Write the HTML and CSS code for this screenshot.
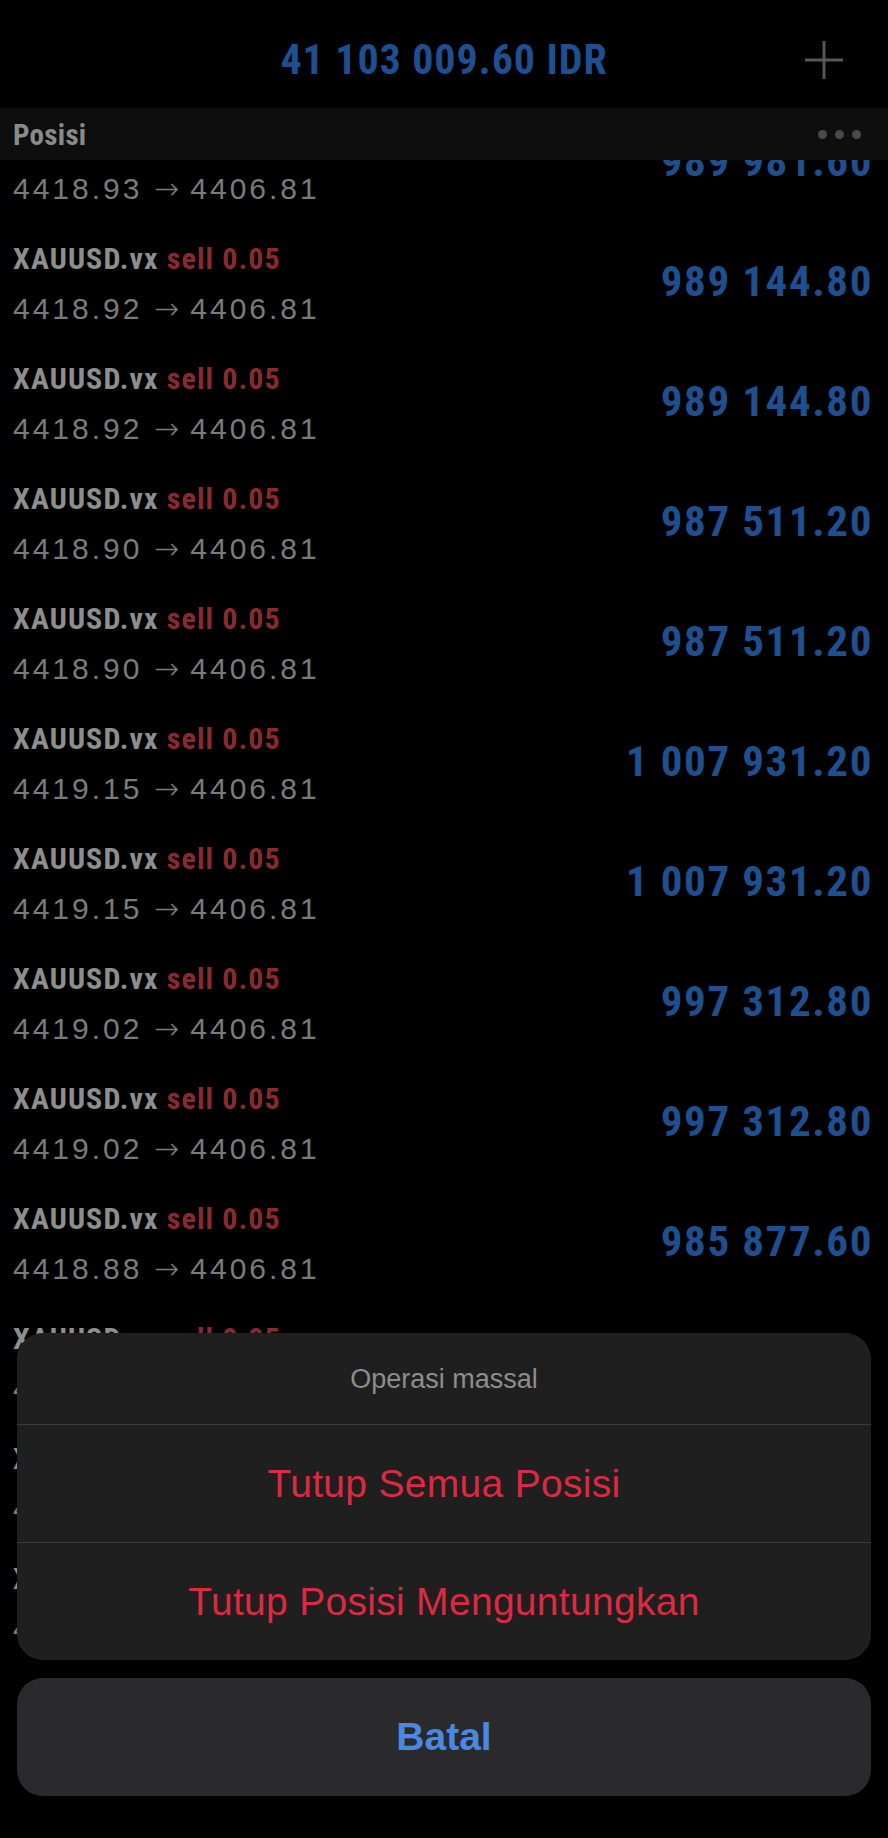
FILE: index.html
```html
<!DOCTYPE html>
<html lang="en">
<head>
    <meta charset="UTF-8">
    <meta name="viewport" content="width=device-width, initial-scale=1.0">
    <title>Posisi</title>
    <link rel="stylesheet" href="styles.css">
</head>
<body>
    <div class="screen">
        <header class="top-bar">
            <div></div>
            <h1 class="balance">41 103 009.60 IDR</h1>
            <button class="add-btn" aria-label="Tambah">
                <svg width="40" height="40" viewBox="0 0 40 40">
                    <path d="M20 1 V39 M1 20 H39" stroke="#575757" stroke-width="3" fill="none"/>
                </svg>
            </button>
        </header>

        <div class="list-wrap">
            <div class="section-bar">
                <span class="section-title">Posisi</span>
                <span class="dots"><i></i><i></i><i></i></span>
            </div>

            <ul class="positions">
                <li class="row">
                    <div class="info">
                        <div class="title">XAUUSD.vx <span class="side">sell 0.05</span></div>
                        <div class="prices">4418.93 <span class="arrow">→</span> 4406.81</div>
                    </div>
                    <div class="profit">989 981.60</div>
                </li>
                <li class="row">
                    <div class="info">
                        <div class="title">XAUUSD.vx <span class="side">sell 0.05</span></div>
                        <div class="prices">4418.92 <span class="arrow">→</span> 4406.81</div>
                    </div>
                    <div class="profit">989 144.80</div>
                </li>
                <li class="row">
                    <div class="info">
                        <div class="title">XAUUSD.vx <span class="side">sell 0.05</span></div>
                        <div class="prices">4418.92 <span class="arrow">→</span> 4406.81</div>
                    </div>
                    <div class="profit">989 144.80</div>
                </li>
                <li class="row">
                    <div class="info">
                        <div class="title">XAUUSD.vx <span class="side">sell 0.05</span></div>
                        <div class="prices">4418.90 <span class="arrow">→</span> 4406.81</div>
                    </div>
                    <div class="profit">987 511.20</div>
                </li>
                <li class="row">
                    <div class="info">
                        <div class="title">XAUUSD.vx <span class="side">sell 0.05</span></div>
                        <div class="prices">4418.90 <span class="arrow">→</span> 4406.81</div>
                    </div>
                    <div class="profit">987 511.20</div>
                </li>
                <li class="row">
                    <div class="info">
                        <div class="title">XAUUSD.vx <span class="side">sell 0.05</span></div>
                        <div class="prices">4419.15 <span class="arrow">→</span> 4406.81</div>
                    </div>
                    <div class="profit">1 007 931.20</div>
                </li>
                <li class="row">
                    <div class="info">
                        <div class="title">XAUUSD.vx <span class="side">sell 0.05</span></div>
                        <div class="prices">4419.15 <span class="arrow">→</span> 4406.81</div>
                    </div>
                    <div class="profit">1 007 931.20</div>
                </li>
                <li class="row">
                    <div class="info">
                        <div class="title">XAUUSD.vx <span class="side">sell 0.05</span></div>
                        <div class="prices">4419.02 <span class="arrow">→</span> 4406.81</div>
                    </div>
                    <div class="profit">997 312.80</div>
                </li>
                <li class="row">
                    <div class="info">
                        <div class="title">XAUUSD.vx <span class="side">sell 0.05</span></div>
                        <div class="prices">4419.02 <span class="arrow">→</span> 4406.81</div>
                    </div>
                    <div class="profit">997 312.80</div>
                </li>
                <li class="row">
                    <div class="info">
                        <div class="title">XAUUSD.vx <span class="side">sell 0.05</span></div>
                        <div class="prices">4418.88 <span class="arrow">→</span> 4406.81</div>
                    </div>
                    <div class="profit">985 877.60</div>
                </li>
                <li class="row">
                    <div class="info">
                        <div class="title">XAUUSD.vx <span class="side">sell 0.05</span></div>
                        <div class="prices">4418.88 <span class="arrow">→</span> 4406.81</div>
                    </div>
                    <div class="profit">985 877.60</div>
                </li>
                <li class="row">
                    <div class="info">
                        <div class="title">XAUUSD.vx <span class="side">sell 0.05</span></div>
                        <div class="prices">4418.86 <span class="arrow">→</span> 4406.81</div>
                    </div>
                    <div class="profit">984 244.00</div>
                </li>
                <li class="row">
                    <div class="info">
                        <div class="title">XAUUSD.vx <span class="side">sell 0.05</span></div>
                        <div class="prices">4418.86 <span class="arrow">→</span> 4406.81</div>
                    </div>
                    <div class="profit">984 244.00</div>
                </li>
            </ul>
        </div>

        <!-- action sheet over the list -->
        <div class="sheet-layer">
            <div class="sheet">
                <div class="sheet-title">Operasi massal</div>
                <button class="sheet-btn danger">Tutup Semua Posisi</button>
                <button class="sheet-btn danger">Tutup Posisi Menguntungkan</button>
            </div>
            <button class="cancel-btn">Batal</button>
        </div>
    </div>
</body>
</html>
```

FILE: styles.css
```css
* {
    box-sizing: border-box;
}

html, body {
    margin: 0;
    padding: 0;
    background-color: #000;
}

body {
    font-family: "Liberation Sans", Arial, sans-serif;
    overflow: hidden;
}

.screen {
    position: relative;
    width: 888px;
    height: 1838px;
    overflow: hidden;
    background-color: #000;
}

.top-bar {
    height: 108px;
    padding-top: 12px;
    display: grid;
    grid-template-columns: 1fr auto 1fr;
    align-items: center;
}

.balance {
    margin: 0;
    font-family: "Roboto Condensed", Roboto, "DejaVu Sans Condensed", sans-serif;
    font-stretch: condensed;
    font-weight: bold;
    font-size: 42px;
    line-height: 1;
    letter-spacing: 0.9px;
    color: #1d4f91;
}

.add-btn {
    justify-self: end;
    margin-right: 44px;
    padding: 0;
    border: none;
    background: none;
    width: 40px;
    height: 40px;
}

.add-btn svg {
    display: block;
}

.list-wrap {
    position: relative;
}

.section-bar {
    position: absolute;
    top: 0;
    left: 0;
    right: 0;
    height: 52px;
    z-index: 2;
    background-color: #0e0e0e;
    display: flex;
    align-items: center;
    justify-content: space-between;
    padding: 0 27px 0 13px;
}

.section-title {
    font-family: "Roboto Condensed", Roboto, "DejaVu Sans Condensed", sans-serif;
    font-stretch: condensed;
    font-weight: bold;
    font-size: 29px;
    letter-spacing: 0.3px;
    color: #8a8a8a;
    margin-top: 1px;
}

.dots {
    display: flex;
    gap: 8px;
}

.dots i {
    display: block;
    width: 9px;
    height: 9px;
    border-radius: 50%;
    background-color: #4a4a4a;
}

.positions {
    list-style: none;
    margin: 0;
    padding: 0;
}

.row {
    height: 120px;
    display: flex;
    align-items: flex-start;
    justify-content: space-between;
    padding: 14px 15px 0 13px;
}

.title {
    font-family: "Roboto Condensed", Roboto, "DejaVu Sans Condensed", sans-serif;
    font-stretch: condensed;
    font-weight: bold;
    font-size: 30px;
    line-height: 34px;
    letter-spacing: 1.1px;
    color: #8e8e8e;
}

.side {
    color: #8b2a2e;
}

.prices {
    margin-top: 15px;
    font-size: 30px;
    line-height: 36px;
    letter-spacing: 3px;
    color: #7b7b7b;
}

.arrow {
    font-family: "DejaVu Sans", sans-serif;
    font-weight: 200;
    font-size: 30px;
    letter-spacing: 0;
}

.profit {
    margin-top: 14px;
    font-family: "Roboto Condensed", Roboto, "DejaVu Sans Condensed", sans-serif;
    font-stretch: condensed;
    font-weight: bold;
    font-size: 43px;
    line-height: 50px;
    letter-spacing: 1.6px;
    color: #1e4f8f;
}

.sheet-layer {
    position: absolute;
    left: 17px;
    right: 17px;
    top: 1333px;
    display: flex;
    flex-direction: column;
    gap: 18px;
    z-index: 5;
}

.sheet {
    background-color: #1f1f1f;
    border-radius: 26px;
    overflow: hidden;
    display: flex;
    flex-direction: column;
}

.sheet-title {
    height: 91px;
    display: flex;
    align-items: center;
    justify-content: center;
    font-size: 27px;
    color: #8d8d8d;
    padding-top: 2px;
}

.sheet-btn {
    height: 118px;
    border: none;
    border-top: 1px solid #3c3c3c;
    background: none;
    font-family: "Liberation Sans", Arial, sans-serif;
    font-size: 39px;
    letter-spacing: 0.3px;
    padding: 0;
    cursor: pointer;
}

.danger {
    color: #dc2a40;
}

.cancel-btn {
    height: 118px;
    border: none;
    border-radius: 26px;
    background-color: #2a2a2c;
    font-family: "Liberation Sans", Arial, sans-serif;
    font-weight: bold;
    font-size: 39px;
    color: #4a88e2;
    padding: 0;
    cursor: pointer;
}
```
